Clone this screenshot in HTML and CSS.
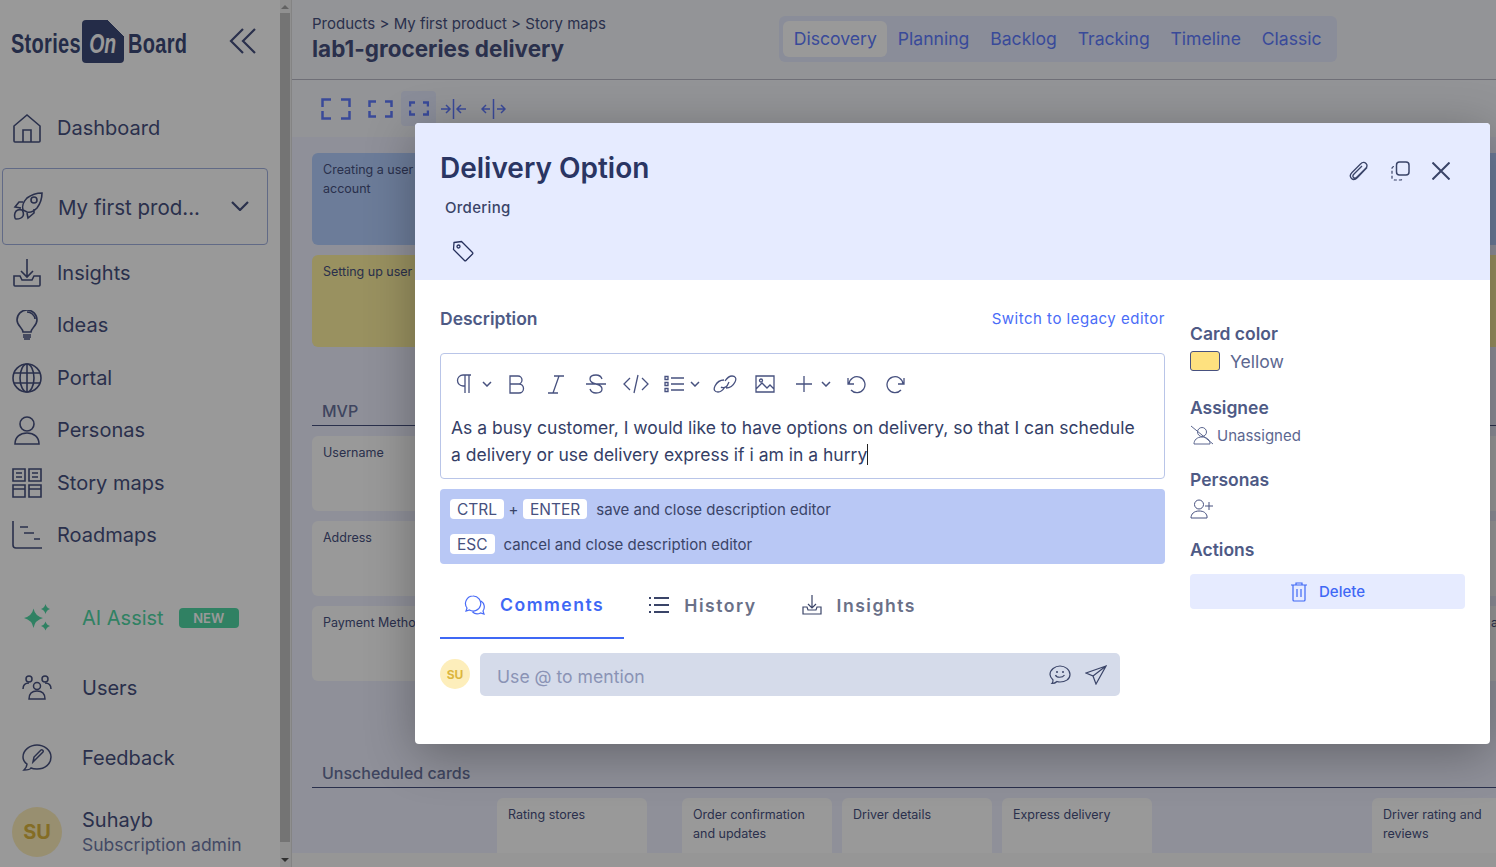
FILE: index.html
```html
<!DOCTYPE html>
<html lang="en">
<head>
    <meta charset="UTF-8">
    <title>StoriesOnBoard</title>
    <link rel="stylesheet" href="styles.css">
</head>
<body>
    <aside class="sidebar">
        <div class="logo-row">
            <div class="logo">
                <span class="logo-word logo-stories">Stories</span>
                <span class="logo-box"><span class="logo-on">On</span></span>
                <span class="logo-word logo-board">Board</span>
            </div>
            <svg class="collapse" width="27" height="28" viewBox="0 0 27 28"><path d="M14 2 2 14l12 12M26 2 14 14l12 12"/></svg>
        </div>
        <a class="nav-item nav-first">
            <svg class="ico" viewBox="0 0 30 30"><path d="M2 13 15 2l13 11v15a1 1 0 0 1-1 1H3a1 1 0 0 1-1-1zM11 29V17h8v12"/></svg>
            Dashboard
        </a>
        <div class="product">
            <svg class="ico" viewBox="0 0 30 30"><path d="M10 19c-1-3 0-8 4-12 4-3 9-5 15-5 0 6-2 11-5 15-3 3-7 5-10 4zM10 11H6l-4 5 6 1M21 18v4l-6 5-1-5M9 19c-3-1-6 0-7 3-1 3 0 6 1 6 3 0 6-1 7-3 1-2 0-5-1-6z"/><circle cx="21" cy="9" r="3"/></svg>
            <span class="product-name">My first prod...</span>
            <svg class="chev" width="18" height="10" viewBox="0 0 18 10"><path d="m1 1 8 8 8-8"/></svg>
        </div>
        <a class="nav-item">
            <svg class="ico" viewBox="0 0 30 30"><path d="M15 1v18M9 13l6 6 6-6M8 18H2v9a1 1 0 0 0 1 1h24a1 1 0 0 0 1-1v-9h-6l-2 4H10z"/></svg>
            Insights
        </a>
        <a class="nav-item">
            <svg class="ico" viewBox="0 0 30 30"><path d="M11 22c0-4-6-6-6-12a10 10 0 0 1 20 0c0 6-6 8-6 12zM11 25h8M11 27h8M12 29h6M15 2a8 8 0 0 1 8 7"/></svg>
            Ideas
        </a>
        <a class="nav-item">
            <svg class="ico" viewBox="0 0 30 30"><circle cx="15" cy="15" r="14"/><ellipse cx="15" cy="15" rx="7" ry="14"/><path d="M15 1v28M2 10h26M2 20h26"/></svg>
            Portal
        </a>
        <a class="nav-item">
            <svg class="ico" viewBox="0 0 30 30"><circle cx="15" cy="9" r="7"/><path d="M3 29c0-7 5-11 12-11s12 4 12 11z"/></svg>
            Personas
        </a>
        <a class="nav-item">
            <svg class="ico" viewBox="0 0 30 30"><path d="M1 1h12v12H1zM17 1h12v12H17zM1 17h12v12H1zM17 17h12v12H17zM4 5h6M4 9h6M20 5h6M20 9h6M1 21h12M17 21h12"/></svg>
            Story maps
        </a>
        <a class="nav-item">
            <svg class="ico" viewBox="0 0 30 30"><path d="M1 1v24a3 3 0 0 0 3 3h26M8 7h8M12 13h10M22 19h6"/></svg>
            Roadmaps
        </a>
        <a class="nav-sub nav-ai">
            <svg class="ico-sub" viewBox="0 0 30 30"><path class="fill" d="M11.500 5.500Q13 13 21 15 13 17 11.500 25 10 17 2 15 10 13 11.500 5.500zM23.500 1Q24.500 5 28 6 24.500 7 23.500 11 22.500 7 19 6 22.500 5 23.500 1zM23.500 18.500Q24.500 22 28 23 24.500 24 23.500 27.500 22.500 24 19 23 22.500 22 23.500 18.500z"/></svg>
            <span>AI Assist</span>
            <span class="new-badge">NEW</span>
        </a>
        <a class="nav-sub">
            <svg class="ico-sub" viewBox="0 0 30 30"><circle cx="7" cy="6" r="3"/><circle cx="23" cy="6" r="3"/><circle cx="15" cy="13" r="3.500"/><path d="M1 16c0-4 2-6 6-6M29 16c0-4-2-6-6-6M7 26c0-5 3-8 8-8s8 3 8 8z"/></svg>
            Users
        </a>
        <a class="nav-sub">
            <svg class="ico-sub" viewBox="0 0 30 30"><path d="M5 21C2 19 1 16 1 14 1 7 8 2 15 2s14 5 14 12-6 12-14 12c-2 0-4 0-6-1-1 2-3 2-7 2 2-2 3-3 3-6zM11 19l1-5 7-7c1-1 3 1 2 2l-7 7z"/></svg>
            Feedback
        </a>
        <div class="user">
            <span class="user-avatar">SU</span>
            <div>
                <div class="user-name">Suhayb</div>
                <div class="user-role">Subscription admin</div>
            </div>
        </div>
    </aside>

    <div class="scrollbar">
        <span class="arrow-up"></span>
        <span class="thumb"></span>
        <span class="arrow-down"></span>
    </div>

    <main class="main">
        <header class="topbar">
            <div>
                <div class="crumbs">Products &gt; My first product &gt; Story maps</div>
                <h1 class="map-title">lab1-groceries delivery</h1>
            </div>
            <nav class="views">
                <a class="view view-active">Discovery</a>
                <a class="view">Planning</a>
                <a class="view">Backlog</a>
                <a class="view">Tracking</a>
                <a class="view">Timeline</a>
                <a class="view">Classic</a>
            </nav>
        </header>
        <div class="zoombar">
            <span class="zoom-btn zoom-1"><svg width="30" height="22" viewBox="0 0 30 22"><path d="M1.500 9V1.500H10M20 1.500h8.500V9M1.500 13v7.500H10M20 20.500h8.500V13"/></svg></span>
            <span class="zoom-btn zoom-2"><svg width="25" height="18" viewBox="0 0 25 18"><path d="M1.500 7V1.500H8M17 1.500h6.500V7M1.500 11v5.500H8M17 16.500h6.500V11"/></svg></span>
            <span class="zoom-btn zoom-on"><svg width="20" height="15" viewBox="0 0 20 15"><path d="M1 5.500V1.500h5M14 1.500h5v4M1 9.500v4h5M14 13.500h5v-4"/></svg></span>
            <span class="zoom-btn zoom-4"><svg class="thin" width="25" height="20" viewBox="0 0 25 20"><path d="M12.500 0v20M0 10h9M5 6l4 4-4 4M25 10h-9M20 6l-4 4 4 4"/></svg></span>
            <span class="zoom-btn"><svg class="thin" width="25" height="20" viewBox="0 0 25 20"><path d="M12.500 0v20M1 10h8M5 6l-4 4 4 4M24 10h-8M20 6l4 4-4 4"/></svg></span>
        </div>
        <section class="board">
            <div class="card-row tall">
                <div class="card card-blue">Creating a user account</div>
                <div class="card card-blue"></div>
            </div>
            <div class="card-row tall">
                <div class="card card-yellow">Setting up user</div>
                <div class="card card-yellow"></div>
            </div>
            <h2 class="release release-mvp">MVP</h2>
            <div class="card-row mid"><div class="card">Username</div><div class="card"></div></div>
            <div class="card-row mid"><div class="card">Address</div><div class="card"></div></div>
            <div class="card-row mid"><div class="card">Payment Method</div><div class="card">a</div></div>
            <h2 class="release release-later">Unscheduled cards</h2>
            <div class="backlog">
                <div class="card">Rating stores</div>
                <div class="card">Order confirmation and updates</div>
                <div class="card">Driver details</div>
                <div class="card">Express delivery</div>
                <div class="card">Driver rating and reviews</div>
            </div>
        </section>
        <div class="bottom-strip"></div>
    </main>

    <div class="backdrop"></div>

    <div class="modal">
        <div class="modal-head">
            <div>
                <h2 class="card-title">Delivery Option</h2>
                <div class="card-parent">Ordering</div>
                <svg class="tag" width="22" height="22" viewBox="0 0 22 22"><path d="M2 2.500 9.500 1.500 20.500 12.500a1 1 0 0 1 0 1.500L14 20.500a1 1 0 0 1-1.500 0L1.500 9.500z"/><circle cx="6.500" cy="6.500" r="1.500"/></svg>
            </div>
            <div class="head-actions">
                <svg width="20" height="20" viewBox="0 0 20 20"><path d="M18 6.500 8.500 16.500c-2 2-4.500 2.500-6 1S1 13.500 3 11.500L11.500 3c2-2 4-2 5.500-.5s1 3.500-.5 5L8 16c-1 1-2.500 1.500-3.500.5s-.5-2.500.5-3.500L13 5"/></svg>
                <svg width="19" height="20" viewBox="0 0 19 20"><rect x="5.500" y="1" width="12.500" height="13" rx="3"/><path class="dash" d="M3 5.500A2 2 0 0 0 1 7.500v9A2.500 2.500 0 0 0 3.500 19h6a2 2 0 0 0 2-2"/></svg>
                <svg width="18" height="18" viewBox="0 0 18 18"><path d="m.5.500 17 17M17.500.500l-17 17"/></svg>
            </div>
        </div>
        <div class="modal-body">
            <div class="col-main">
                <div class="desc-head">
                    <h3 class="label">Description</h3>
                    <a class="legacy">Switch to legacy editor</a>
                </div>
                <div class="editor">
                    <div class="tools">
                        <svg class="t" style="width:20px" viewBox="0 0 20 22"><path d="M15 2H7a5.500 5.500 0 0 0 0 11h2M9 2v18M13 2v18"/></svg>
                        <svg class="caret" viewBox="0 0 10 6"><path d="m1 1 4 4 4-4"/></svg>
                        <svg class="t t-b" viewBox="0 0 20 22"><path d="M3 3h8a4 4 0 0 1 0 8H3zM3 11h9a4.500 4.500 0 0 1 0 9H3zM3 3v17"/></svg>
                        <svg class="t t-i" viewBox="0 0 20 22"><path d="M8 3h10M2 20h10M13 3 7 20"/></svg>
                        <svg class="t t-s" viewBox="0 0 20 22"><path d="M0 11h20M16 6c-1-3-4-4-6-4-4 0-6 2-6 4s2 4 6 5c4 1 6 2 6 5s-3 4-6 4c-3 0-5-1-6-4"/></svg>
                        <svg class="t t-c" viewBox="0 0 26 22"><path d="M7 5 1 11l6 6M19 5l6 6-6 6M15 2l-4 18"/></svg>
                        <svg class="t t-l" viewBox="0 0 20 22"><path d="M7 5h13M7 11h13M7 17h13M1 3.500h3v3H1zM1 9.500h3v3H1zM1 15.500h3v3H1z"/></svg>
                        <svg class="caret" viewBox="0 0 10 6"><path d="m1 1 4 4 4-4"/></svg>
                        <svg class="t t-link" viewBox="0 0 24 22"><path d="M11 7C7 7 4 9 2 13c-2 4 0 6 3 6 3 0 5-2 7-5M13 15c4 0 7-2 9-6 2-4 0-6-3-6-3 0-5 2-7 5M8 14c1 1 4 1 6-1l2-4"/></svg>
                        <svg class="t t-img" viewBox="0 0 20 22"><path d="M1 3h18v16H1zM1 16l6-6 5 5 3-3 4 4"/><circle cx="6" cy="7.500" r="1.500"/></svg>
                        <svg class="t t-p" viewBox="0 0 18 18"><path d="M9 1v16M1 9h16"/></svg>
                        <svg class="caret" viewBox="0 0 10 6"><path d="m1 1 4 4 4-4"/></svg>
                        <svg class="t t-u" viewBox="0 0 20 22"><path d="M2 5v6h6M3 11A8 8 0 1 1 5 17"/></svg>
                        <svg class="t t-r" viewBox="0 0 20 22"><path d="M18 5v6h-6M17 11A8 8 0 1 0 15 17"/></svg>
                    </div>
                    <div class="editor-text">As a busy customer, I would like to have options on delivery, so that I can schedule a delivery or use delivery express if i am in a hurry<span class="cursor"></span></div>
                </div>
                <div class="hints">
                    <div class="hint"><kbd>CTRL</kbd><span class="plus">+</span><kbd>ENTER</kbd><span>save and close description editor</span></div>
                    <div class="hint"><kbd>ESC</kbd><span>cancel and close description editor</span></div>
                </div>
                <div class="tabs">
                    <a class="tab tab-on">
                        <svg viewBox="0 0 22 22"><path d="M9 2a7.500 7.500 0 0 0-6 12l-1 3 3.500-1A7.500 7.500 0 1 0 9 2zM17 7a7 7 0 0 1 2 10l1 3-3.500-1a7 7 0 0 1-8-1"/></svg>
                        Comments
                    </a>
                    <a class="tab">
                        <svg class="dark list-ico" viewBox="0 0 22 22"><path d="M6 4h15M6 11h15M6 18h15M1 4h2M1 11h2M1 18h2"/></svg>
                        History
                    </a>
                    <a class="tab">
                        <svg class="dark" viewBox="0 0 22 22"><path d="M11 1v13M7 10l4 4 4-4M6 13H2v7h18v-7h-4l-1 3H7z"/></svg>
                        Insights
                    </a>
                </div>
                <div class="comment-row">
                    <span class="mini-avatar">SU</span>
                    <div class="comment-input">
                        <span>Use @ to mention</span>
                        <svg width="22" height="20" viewBox="0 0 22 20"><path d="M4 15C2 13 1 12 1 9.500 1 5 6 1 11 1s10 3.500 10 8.500S16 17 11 17c-1 0-2 0-3-.5-1 1-3 2-5 2 1-1 1-2 1-3.500zM6.500 10c1 3 7 3 9 0"/><circle class="fill" cx="8" cy="7" r="1"/><circle class="fill" cx="14" cy="7" r="1"/></svg>
                        <svg width="22" height="20" viewBox="0 0 22 20"><path d="M21 1 1 8l7 3 3 8zM21 1 8 11"/></svg>
                    </div>
                </div>
            </div>
            <div class="col-side">
                <h3 class="side-label side-first">Card color</h3>
                <div class="color-row"><span class="swatch"></span>Yellow</div>
                <h3 class="side-label">Assignee</h3>
                <div class="assignee">
                    <svg width="24" height="20" viewBox="0 0 24 20"><circle cx="12" cy="7" r="4.500"/><path d="M4 19c0-4 3-7 8-7s8 3 8 7zM1 1l22 18"/></svg>
                    Unassigned
                </div>
                <h3 class="side-label side-personas">Personas</h3>
                <svg class="add-persona" width="24" height="20" viewBox="0 0 24 20"><circle cx="9" cy="5.500" r="4.500"/><path d="M1 19c0-4 3-7 8-7s7 2 8 5v2zM15 7h8M19 3v8"/></svg>
                <h3 class="side-label side-actions">Actions</h3>
                <a class="delete">
                    <svg width="18" height="20" viewBox="0 0 18 20"><path d="M1 3h16M3 3v15a1 1 0 0 0 1 1h10a1 1 0 0 0 1-1V3M6 3V1h6v2M7 7v8M11 7v8"/></svg>
                    Delete
                </a>
            </div>
        </div>
    </div>
</body>
</html>
```
FILE: styles.css
```css
* { box-sizing: border-box; }
html, body { height: 100%; }
body {
    margin: 0;
    display: flex;
    height: 867px;
    overflow: hidden;
    font-family: Inter, "Noto Sans", sans-serif;
    color: #47517f;
    background: #fff;
}
svg { fill: none; stroke: currentColor; stroke-width: 1.5; flex: none; }
h1, h2, h3 { margin: 0; }

/* sidebar */
.sidebar {
    width: 280px;
    flex: none;
    padding: 0 12px 0 2px;
    font-size: 20px;
    color: #47517f;
    background: #fff;
}
.logo-row {
    display: flex;
    align-items: center;
    justify-content: space-between;
    height: 82px;
    padding: 0 12px 0 9px;
}
.logo { display: flex; align-items: center; color: #3d4a78; }
.logo-word {
    font: 700 27px "Liberation Sans", sans-serif;
    display: inline-block;
    white-space: nowrap;
    margin-top: 6px;
    transform-origin: left center;
    transform: scaleX(.74);
    letter-spacing: .4px;
}
.logo-stories { width: 71px; }
.logo-board { width: 59px; margin-left: 4px; }
.logo-box {
    width: 42px;
    height: 43px;
    background: linear-gradient(225deg, #fff 0 12px, #3d4a78 12px);
    border-radius: 4px;
    display: flex;
    align-items: center;
    justify-content: center;
}
.logo-on {
    color: #fff;
    font: italic 700 27px "Liberation Sans", sans-serif;
    transform: scaleX(.72);
    padding-top: 6px;
}
.collapse { stroke-width: 2.2; }
.nav-item {
    display: flex;
    align-items: center;
    gap: 15px;
    height: 52.5px;
    padding-left: 10px;
}
.nav-first { margin-top: 20px; margin-bottom: 13px; }
.ico { width: 30px; height: 30px; stroke-width: 1.6; }
.product {
    display: flex;
    align-items: center;
    height: 77px;
    margin-bottom: 2px;
    padding: 0 18px 0 10px;
    border: 1px solid #a2b1e0;
    border-radius: 4px;
}
.product-name { flex: 1; margin-left: 15px; padding-top: 2px; font-size: 20.500px; }
.chev { stroke-width: 2.2; }
.nav-sub {
    display: flex;
    align-items: center;
    height: 70px;
    padding-left: 20px;
    gap: 30px;
}
.nav-ai { margin-top: 21px; gap: 30px; color: #50d8a6; }
.ico-sub { width: 30px; height: 30px; stroke-width: 1.5; }
.nav-ai .ico-sub { stroke: none; }
.fill { fill: currentColor; stroke: none; }
.new-badge {
    margin-left: -15px;
    width: 60px;
    height: 20px;
    border-radius: 4px;
    background: #50d8a6;
    color: #fff;
    font-size: 13px;
    font-weight: 600;
    display: flex;
    align-items: center;
    justify-content: center;
}
.user { display: flex; align-items: center; gap: 20px; margin: 14px 0 0 10px; }
.user-avatar {
    width: 50px;
    height: 50px;
    border-radius: 50%;
    background: #fdeebb;
    color: #dcb63e;
    font-weight: 700;
    display: flex;
    align-items: center;
    justify-content: center;
}
.user-name { font-size: 20px; line-height: 26px; }
.user-role { font-size: 17.500px; line-height: 24px; color: #6f7aa8; }

/* page scrollbar */
.scrollbar {
    width: 12px;
    flex: none;
    display: flex;
    flex-direction: column;
    align-items: flex-start;
    background: #f1f1f1;
    border-right: 1px solid #dcdcdc;
}
.thumb { width: 10px; flex: 1; background: #c1c1c1; margin: 4px 0 16px; }
.arrow-up, .arrow-down { width: 0; height: 0; margin: 5px 0 0 1px; border: 4px solid transparent; border-top: 0; border-bottom: 4px solid #a3a3a3; }
.arrow-down { margin: 0 0 5px 1px; border: 4px solid transparent; border-bottom: 0; border-top: 4px solid #505050; }

/* page behind the dialog */
.main { flex: 1; min-width: 0; display: flex; flex-direction: column; background: #f6f7fc; }
.topbar {
    height: 80px;
    flex: none;
    display: flex;
    justify-content: space-between;
    padding: 14px 159px 0 20px;
    border-bottom: 1px solid #b9bac6;
}
.crumbs { font-size: 15px; line-height: 20px; color: #47517f; }
.map-title { font-size: 22.500px; line-height: 30px; font-weight: 700; color: #47517f; }
.views {
    display: flex;
    align-items: center;
    height: 46px;
    margin-top: 2px;
    padding: 0 5px 0 4px;
    border-radius: 6px;
    background: #e6ebff;
}
.view { font-size: 17.600px; line-height: 36px; padding: 0 10.400px; color: #607cff; }
.view-active { background: #fff; border-radius: 6px; padding: 0 10.500px; }
.zoombar { height: 57px; flex: none; display: flex; align-items: center; padding-left: 29px; color: #607cff; }
.zoom-btn { display: flex; align-items: center; justify-content: center; height: 35px; }
.zoom-btn svg { stroke-width: 2.500; }
.zoom-btn svg.thin { stroke-width: 1.500; }
.zoom-1 { margin-right: 17px; }
.zoom-2 { margin-right: 8px; }
.zoom-on { width: 35px; margin-right: 5px; background: #e6ebff; border-radius: 4px; }
.zoom-4 { margin-right: 15px; }
.board { flex: 1; min-height: 0; background: #eef1ff; padding: 16px 0 0 20px; overflow: hidden; }
.card {
    border-radius: 6px;
    background: #fff;
    font-size: 12.500px;
    line-height: 19px;
    padding: 7px 11px;
    color: #47517f;
}
.card-blue { background: #b4cfff; }
.card-yellow { background: #fff2a0; }
.card-row { display: grid; grid-template-columns: 150px 150px; column-gap: 1018px; margin-bottom: 10px; }
.card-row .card:first-child { width: 150px; }
.tall { height: 92px; }
.mid { height: 75px; }
.release {
    font-size: 16px;
    line-height: 22px;
    font-weight: 500;
    padding: 0 0 3px 10px;
    margin-bottom: 10px;
    color: #69739e;
    border-bottom: 1px solid #47517f;
}
.release-mvp { margin-top: 53px; }
.release-later { margin-top: 81px; }
.backlog { display: flex; height: 70px; padding-left: 185px; }
.backlog .card { width: 150px; flex: none; margin-right: 10px; }
.backlog .card:nth-child(1) { margin-right: 35px; }
.backlog .card:nth-child(4) { margin-right: 220px; }
.bottom-strip { height: 14px; flex: none; background: #fafafa; }

/* dialog */
.backdrop { position: absolute; inset: 0; background: rgba(0, 0, 0, .4); }
.modal {
    position: absolute;
    left: 415px;
    top: 123px;
    width: 1075px;
    height: 621px;
    border-radius: 4px;
    overflow: hidden;
    background: #fff;
    box-shadow: 0 10px 50px rgba(0, 0, 0, .3);
}
.modal-head {
    height: 157px;
    display: flex;
    justify-content: space-between;
    padding: 28px 40px 0 25px;
    background: #e6ebff;
    color: #252f5c;
}
.card-title { font-size: 28px; line-height: 35px; font-weight: 600; color: #2a3563; }
.card-parent { margin: 12px 0 0 5px; font-size: 15px; line-height: 20px; letter-spacing: .3px; font-weight: 500; color: #3a4468; }
.tag { display: block; margin: 22px 0 0 12px; stroke-width: 1.3; }
.head-actions { display: flex; gap: 22px; align-items: flex-start; padding-top: 10px; color: #3a4468; }
.head-actions svg:first-child { stroke-width: 1.300; }
.head-actions svg:last-child { stroke-width: 2; margin-top: 1px; }
.dash { stroke-dasharray: 3 2; stroke-width: 1.200; }
.modal-body { display: flex; gap: 25px; padding: 0 25px; }
.col-main { width: 725px; flex: none; }
.col-side { width: 275px; }
.desc-head { display: flex; justify-content: space-between; align-items: center; margin-top: 26px; height: 24px; }
.label { font-size: 17.500px; font-weight: 600; color: #4e5a85; }
.legacy { font-size: 15px; letter-spacing: .5px; color: #4a6cf7; }
.editor { margin-top: 23px; height: 126px; padding: 0 10px; border: 1px solid #b9c5e8; border-radius: 4px; }
.tools { display: flex; align-items: center; height: 60px; color: #47517f; }
.t { width: 20px; height: 22px; stroke-width: 1.300; }
.caret { width: 10px; height: 6px; margin: 0 0 0 6px; }
.tools svg:first-child { margin-left: 5px; }
.t-b { margin-left: 15px; }
.t-i { margin-left: 19px; }
.t-s { margin-left: 20px; }
.t-c { width: 26px; margin-left: 17px; }
.t-l { margin-left: 15px; }
.t-l + .caret { margin-left: 6px; }
.t-link { width: 24px; margin-left: 13px; }
.t-img { margin-left: 18px; }
.t-p { width: 18px; height: 18px; margin-left: 20px; }
.t-p + .caret { margin-left: 8px; }
.t-u { margin-left: 15px; }
.t-r { margin-left: 20px; }
.editor-text { padding-right: 16px; font-size: 17.500px; line-height: 27px; color: #343e66; }
.cursor { display: inline-block; width: 1px; height: 21px; background: #222; vertical-align: -4px; }
.hints { margin-top: 10px; height: 75px; padding: 10px 10px 0; background: #b9c8f5; border-radius: 4px; font-size: 15px; color: #3a4468; }
.hint { display: flex; align-items: center; gap: 9px; height: 20px; margin-bottom: 15px; }
.plus { margin: 0 -4.500px; }
kbd {
    font: 15.500px/21px Inter, sans-serif;
    padding: 0 7px;
    height: 20px;
    background: #fff;
    border-radius: 4px;
    color: #47517f;
}
.tabs { display: flex; height: 75px; }
.tab {
    display: flex;
    align-items: center;
    gap: 14px;
    padding: 7px 20px 0 24px;
    font-size: 17.600px;
    font-weight: 600;
    letter-spacing: 1.500px;
    color: #6a7088;
}
.tab-on { padding-top: 8px; color: #3f68f5; border-bottom: 2px solid #3f68f5; }
.tab svg { width: 22px; height: 22px; stroke-width: 1.200; color: #4a6cf7; }
.tab svg.dark { color: #3a4468; }
.tab svg.list-ico { stroke-width: 2; }
.comment-row { display: flex; align-items: center; gap: 10px; margin-top: 14px; }
.mini-avatar {
    width: 30px;
    height: 30px;
    margin-top: -1px;
    border-radius: 50%;
    background: #fdeebb;
    color: #dcb63e;
    font-size: 12px;
    font-weight: 700;
    display: flex;
    align-items: center;
    justify-content: center;
}
.comment-input {
    width: 640px;
    height: 43px;
    display: flex;
    align-items: center;
    gap: 14px;
    padding: 3px 13px 0 17px;
    background: #d5dbea;
    border-radius: 5px;
    font-size: 17.600px;
    color: #8a93b5;
}
.comment-input span { flex: 1; }
.comment-input svg { color: #3a4468; stroke-width: 1.200; margin-top: -3px; }
.side-label { font-size: 17.500px; line-height: 24px; font-weight: 600; color: #4e5a85; margin-top: 22px; }
.side-first { margin-top: 42px; }
.color-row { display: flex; align-items: center; gap: 10px; height: 20px; margin: 5px 0 25px; font-size: 17.600px; color: #5c6790; }
.color-row + .side-label { margin-top: 0; }
.swatch { width: 30px; height: 20px; background: #fee17f; border: 1px solid #47517f; border-radius: 3px; }
.assignee { display: flex; align-items: center; gap: 3px; height: 20px; margin-top: 5px; font-size: 15px; color: #5c6790; }
.assignee svg { stroke-width: 1; }
.add-persona { display: block; margin: 7px 0 0; stroke-width: 1; color: #47517f; }
.side-personas { margin-top: 23px; }
.side-actions { margin-top: 19px; }
.delete {
    display: flex;
    align-items: center;
    justify-content: center;
    gap: 11px;
    height: 35px;
    margin-top: 12px;
    background: #e6ebff;
    border-radius: 4px;
    font-size: 15px;
    font-weight: 500;
    color: #3f68f5;
}
.delete svg { stroke-width: 1.200; }
```
